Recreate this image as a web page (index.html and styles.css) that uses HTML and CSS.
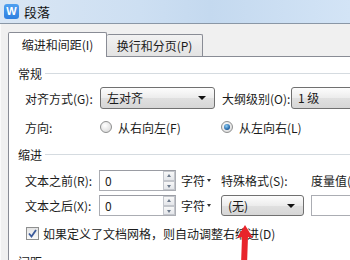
FILE: index.html
```html
<!DOCTYPE html>
<html lang="zh">
<head>
  <meta charset="UTF-8">
  <title>段落</title>
  <meta name="viewport" content="width=device-width, initial-scale=1.0">
  <link rel="stylesheet" href="styles.css">
</head>
<body>
  <div class="window">
    <div class="titlebar">
      <span class="app-icon">W</span>
      <span class="title">段落</span>
    </div>
    <div class="dialog">
      <div class="tabs">
        <div class="tab active">缩进和间距(I)</div>
        <div class="tab">换行和分页(P)</div>
      </div>
      <div class="panel">
        <div class="group-title g1"><span>常规</span></div>
        <div class="row r1">
          <span class="label">对齐方式(G):</span>
          <div class="select sel-align"><span>左对齐</span><i class="caret"></i></div>
          <span class="label2">大纲级别(O):</span>
          <div class="select sel-outline"><span>1 级</span><i class="caret"></i></div>
        </div>
        <div class="row r2">
          <span class="label">方向:</span>
          <span class="radio"></span>
          <span class="opt opt-rtl">从右向左(F)</span>
          <span class="radio checked"></span>
          <span class="opt">从左向右(L)</span>
        </div>
        <div class="group-title g2"><span>缩进</span></div>
        <div class="row r3">
          <span class="label">文本之前(R):</span>
          <div class="spin"><span>0</span><div class="spin-btns"><i class="up"></i><i class="down"></i></div></div>
          <span class="unit">字符<i class="mini-caret"></i></span>
          <span class="label3">特殊格式(S):</span>
          <span class="label4">度量值(Y):</span>
        </div>
        <div class="row r4">
          <span class="label">文本之后(X):</span>
          <div class="spin"><span>0</span><div class="spin-btns"><i class="up"></i><i class="down"></i></div></div>
          <span class="unit">字符<i class="mini-caret"></i></span>
          <div class="select sel-special"><span>(无)</span><i class="caret"></i></div>
          <div class="textbox"></div>
        </div>
        <div class="row r5">
          <span class="checkbox">
            <svg width="9" height="9" viewBox="0 0 9 9"><path d="M1 4.5 L3.5 7.5 L8 1" fill="none" stroke="#3b5a9a" stroke-width="1.8"/></svg>
          </span>
          <span class="check-text">如果定义了文档网格，则自动调整右缩进(D)</span>
        </div>
        <div class="group-title g3"><span>间距</span></div>
      </div>
    </div>
    <svg class="arrow" width="24" height="40" viewBox="0 0 24 40">
      <polygon points="12,0 20,13 15,12 14,40 8,40 9,12 4,13" fill="#e8242b"/>
    </svg>
  </div>
</body>
</html>
```

FILE: styles.css
```css
body {
  margin: 0;
  background: #f0f0f0;
  font-family: "Noto Sans CJK SC", "Liberation Sans", sans-serif;
  font-size: 12px;
  color: #1b1b1b;
  overflow: hidden;
}
.window {
  position: relative;
  width: 350px;
  height: 260px;
  overflow: hidden;
}
.titlebar {
  height: 23px;
  display: flex;
  align-items: center;
  padding-left: 4px;
  background: linear-gradient(90deg, #d9e6f4 0%, #cddff2 40%, #c4d9ef 60%, #d3e4f6 100%);
  border-bottom: 1px solid #8a97a6;
}
.app-icon {
  width: 15px;
  height: 15px;
  border-radius: 3px;
  background: linear-gradient(#4fa0f0, #2f7fe0);
  color: #fff;
  font-family: "Liberation Sans", sans-serif;
  font-weight: 700;
  font-size: 11px;
  line-height: 15px;
  text-align: center;
}
.title {
  margin-left: 5px;
  font-size: 13px;
  color: #111;
}
.dialog {
  padding-top: 8px;
  border-left: 1px solid #fafafa;
}
.tabs {
  display: flex;
  align-items: flex-end;
  margin-left: 7px;
  height: 24px;
  position: relative;
  z-index: 1;
}
.tab {
  box-sizing: border-box;
  border: 1px solid #898c95;
  border-bottom: none;
  background: linear-gradient(#f2f2f2, #e3e3e3);
  height: 22px;
  line-height: 21px;
  padding: 0;
  white-space: nowrap;
  border-radius: 2px 2px 0 0;
}
.tab.active {
  background: #fff;
  height: 25px;
  line-height: 24px;
  width: 99px;
  text-align: center;
  margin-bottom: -1px;
}
.tab + .tab {
  border-left: none;
  width: 96px;
  text-align: center;
}
.panel {
  margin-left: 7px;
  height: 220px;
  background: #fff;
  border-left: 1px solid #898c95;
  border-top: 1px solid #898c95;
}
.group-title {
  display: flex;
  align-items: center;
  height: 16px;
  padding-left: 9px;
}
.group-title::after {
  content: "";
  flex: 1;
  height: 1px;
  background: #d5dbe0;
  margin-left: 3px;
}
.g1 { margin-top: 8px; }
.g2 { margin-top: 10px; }
.g3 { margin-top: 12px; }
.row {
  display: flex;
  align-items: center;
  padding-left: 16px;
  white-space: nowrap;
}
.r1 { margin-top: 6px; height: 22px; }
.r2 { margin-top: 9px; height: 18px; }
.r3 { margin-top: 8px; height: 21px; }
.r4 { margin-top: 4px; height: 21px; }
.r5 { margin-top: 9px; height: 16px; padding-left: 17px; }
.label {
  width: 75px;
  flex: none;
}
.label2 {
  margin-left: 7px;
  width: 69px;
  flex: none;
}
.label3 {
  margin-left: 10px;
  width: 90px;
  flex: none;
}
.label4 { flex: none; }
.select {
  box-sizing: border-box;
  position: relative;
  height: 22px;
  border: 1px solid #707070;
  border-radius: 3px;
  background: linear-gradient(#fdfdfd, #ececec 50%, #e0e0e0 51%, #d6d6d6);
  padding-left: 6px;
  line-height: 20px;
  flex: none;
}
.sel-align { width: 115px; }
.sel-outline { width: 80px; }
.sel-special { width: 83px; margin-left: 10px; height: 21px; line-height: 19px; }
.caret {
  position: absolute;
  right: 8px;
  top: 8px;
  border-left: 4px solid transparent;
  border-right: 4px solid transparent;
  border-top: 4px solid #111;
}
.radio {
  box-sizing: border-box;
  width: 12px;
  height: 12px;
  border-radius: 50%;
  border: 1px solid #8e8f8f;
  background: radial-gradient(circle at 40% 35%, #fff, #d4d4d4);
  flex: none;
  position: relative;
}
.radio.checked::after {
  content: "";
  position: absolute;
  left: 2px;
  top: 2px;
  width: 6px;
  height: 6px;
  border-radius: 50%;
  background: radial-gradient(circle at 40% 35%, #8fd0f7, #1a5b9e 70%);
}
.opt { margin-left: 6px; }
.opt-rtl { width: 103px; flex: none; }
.spin {
  box-sizing: border-box;
  width: 77px;
  height: 21px;
  border: 1px solid #abadb3;
  border-top-color: #9a9ca3;
  display: flex;
  align-items: center;
  justify-content: space-between;
  padding-left: 5px;
  flex: none;
  margin-left: -1px;
}
.spin-btns {
  display: flex;
  flex-direction: column;
  height: 19px;
  width: 12px;
}
.spin-btns i {
  flex: 1;
  position: relative;
  box-sizing: border-box;
  border: 1px solid #c3c6cc;
  background: linear-gradient(#f8f8f8, #e4e6ea);
}
.spin-btns i::after {
  content: "";
  position: absolute;
  left: 3px;
  top: 2px;
  border-left: 2.5px solid transparent;
  border-right: 2.5px solid transparent;
}
.spin-btns .up::after { border-bottom: 3px solid #6d7a8c; }
.spin-btns .down::after { border-top: 3px solid #6d7a8c; top: 3px; }
.unit {
  margin-left: 5px;
  flex: none;
  display: flex;
  align-items: center;
}
.mini-caret {
  margin-left: 2px;
  border-left: 2.5px solid transparent;
  border-right: 2.5px solid transparent;
  border-top: 3px solid #333;
}
.textbox {
  box-sizing: border-box;
  margin-left: 7px;
  height: 21px;
  width: 60px;
  border: 1px solid #abadb3;
  background: #fff;
  flex: none;
}
.checkbox {
  box-sizing: border-box;
  width: 13px;
  height: 13px;
  border: 1px solid #8e8f8f;
  background: linear-gradient(#e4e4e4, #fafafa);
  display: flex;
  align-items: center;
  justify-content: center;
  flex: none;
}
.check-text { margin-left: 4px; }
.arrow {
  position: absolute;
  left: 233px;
  top: 225px;
}
```
